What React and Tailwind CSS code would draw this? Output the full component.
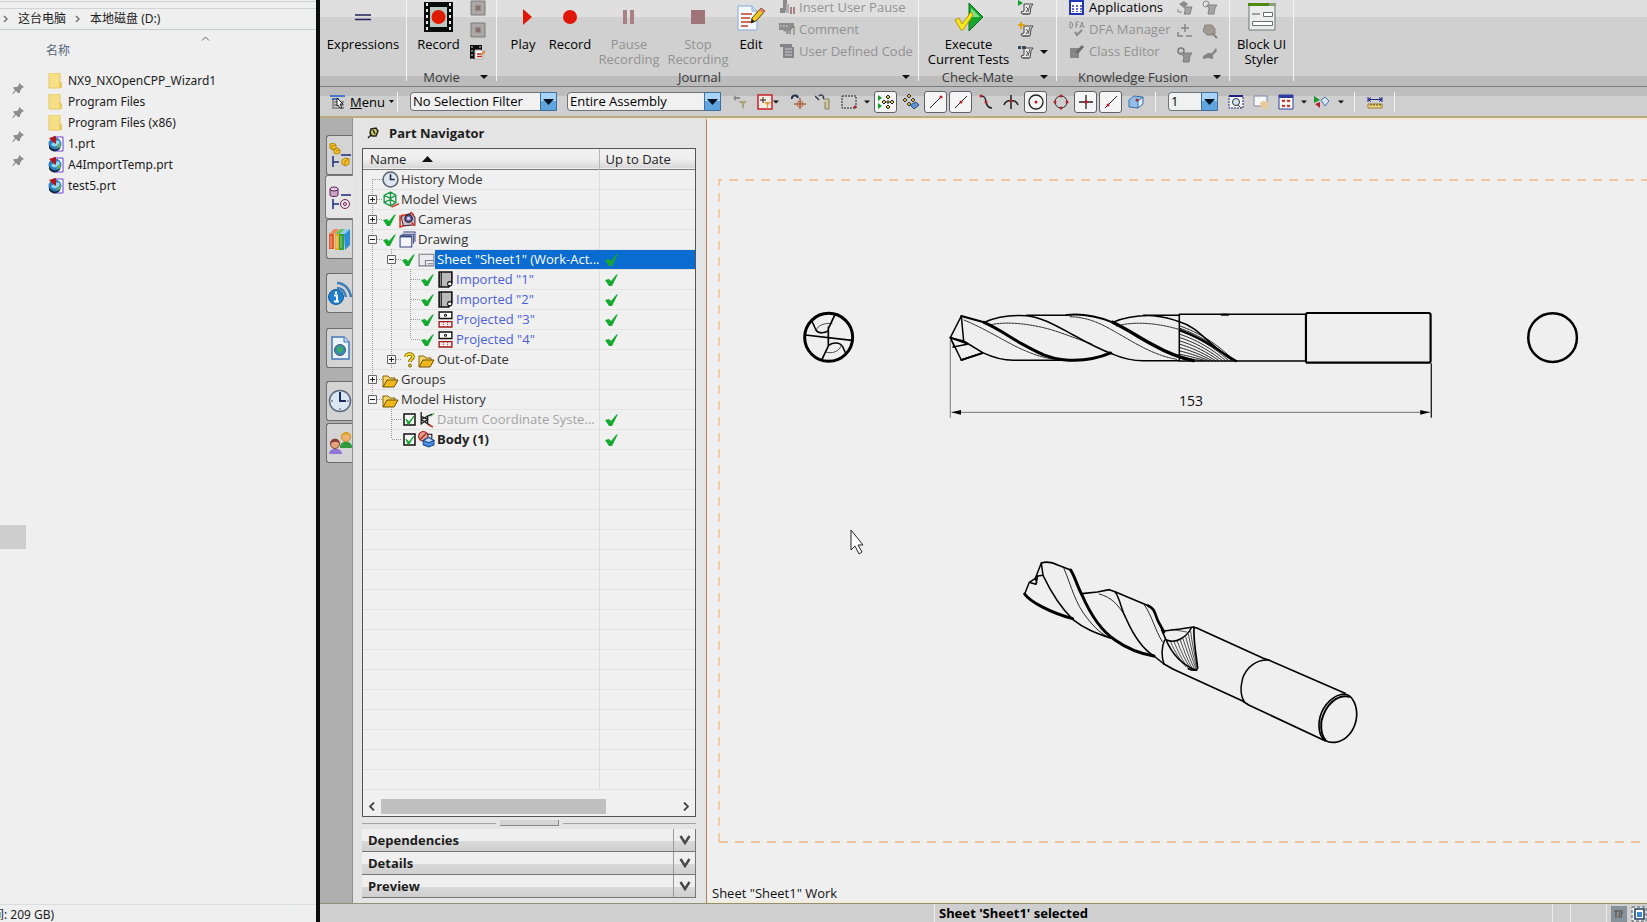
import React from 'react';

const Svg = ({ s = 16, box = 16, className = '', children }) => (
    <svg width={s} height={s} viewBox={`0 0 ${box} ${box}`} fill="none" className={`shrink-0 ${className}`} aria-hidden="true">
        {children}
    </svg>
);

const Down = ({ className = '' }) => (
    <svg width="8" height="4" viewBox="0 0 8 4" className={`shrink-0 ${className}`} aria-hidden="true">
        <path d="M0 0H8L4 4Z" fill="#111" />
    </svg>
);

/* ---------- file explorer ---------- */

const FolderIcon = () => (
    <Svg>
        <path d="M1 0H12V15H1Z" fill="#f6df86" stroke="#e3c766" />
        <path d="M12 8L14 10V15H11Z" fill="#e8c95c" />
    </Svg>
);

const PrtIcon = () => (
    <Svg>
        <path d="M5 1H15V15H5" fill="#fff" stroke="#6a3fd0" />
        <circle cx="7" cy="8" r="6.5" fill="#2b7fc4" />
        <path d="M1 9C3 14 9 15 13 11C10 17 3 16 1 12Z" fill="#123" />
        <path d="M3 8C5 12 10 11 12 6L10 4Z" fill="#8fd8f0" />
        <path d="M8 12L13 6L12 11Z" fill="#7cb342" />
        <path d="M1 2L8 0L8 8L5 6Z" fill="#b4161c" />
    </Svg>
);

const Pin = () => (
    <Svg s={12} box={12}>
        <path d="M7 0L12 4L10 5L8 8L8 10L6 10L4 8L1 11L0 11L3 7L1 5L2 4L5 4L7 2Z" fill="#8d8d8d" />
    </Svg>
);

const files = [
    { name: 'NX9_NXOpenCPP_Wizard1', icon: FolderIcon },
    { name: 'Program Files', icon: FolderIcon },
    { name: 'Program Files (x86)', icon: FolderIcon },
    { name: '1.prt', icon: PrtIcon },
    { name: 'A4ImportTemp.prt', icon: PrtIcon },
    { name: 'test5.prt', icon: PrtIcon },
];

const Chevron = () => (
    <Svg s={8} box={8}>
        <path d="M2 1L5 4L2 7" stroke="#777" strokeWidth="1.5" />
    </Svg>
);

const Explorer = () => (
    <aside className="w-[316px] shrink-0 flex flex-col bg-[#efefef] text-[12px] leading-4 text-[#1c1c1c] font-['Noto_Sans','Noto_Sans_CJK_SC',sans-serif] overflow-hidden">
        <div className="h-2 border-y border-[#cfd3d3] mt-px shrink-0" />
        <nav className="h-[21px] shrink-0 flex items-center pl-[2px] border-b border-[#c6cccc]">
            <Chevron />
            <a href="#pc" className="ml-2">这台电脑</a>
            <span className="mx-2"><Chevron /></span>
            <a href="#d">本地磁盘 (D:)</a>
        </nav>
        <div className="flex flex-1 min-h-0">
            <div className="w-[46px] shrink-0 pt-[53px] flex flex-col">
                <div className="flex flex-col gap-3 pl-3">
                    <Pin /><Pin /><Pin /><Pin />
                </div>
                <div className="mt-[358px] w-[26px] h-6 bg-[#cecece]" />
            </div>
            <div className="flex-1">
                <div className="flex justify-center h-[13px] items-center pr-[15px] pt-1">
                    <svg width="9" height="5" viewBox="0 0 9 5" fill="none" className="ml-16"><path d="M1 4.500L4.500 1L8 4.500" stroke="#666" /></svg>
                </div>
                <button className="text-[#56677c] block">名称</button>
                <ul className="mt-[11px]">
                    {files.map((f) => (
                        <li key={f.name} className="h-[21px] flex items-center gap-1 pl-[2px]">
                            <f.icon />
                            <a href="#file">{f.name}</a>
                        </li>
                    ))}
                </ul>
            </div>
        </div>
        <footer className="h-[18px] shrink-0 border-t border-[#d9dede] -ml-2 leading-[20px] whitespace-nowrap">间: 209 GB)</footer>
    </aside>
);

/* ---------- ribbon ---------- */

const FilmIcon = () => (
    <Svg s={30} box={30}>
        <path d="M0 0H29V30H0Z" fill="#0a0c0c" />
        <path d="M3 1V30M26 1V30" stroke="#e8e8e8" strokeWidth="2" strokeDasharray="3 3" />
        <path d="M6 5H23V25H6Z" fill="#b9c9c4" />
        <circle cx="14.500" cy="15" r="7" fill="#e01b00" />
    </Svg>
);

const EditIcon = () => (
    <Svg s={28} box={28}>
        <path d="M1 3H15L20 8V27H1Z" fill="#f4f8ff" stroke="#8aa7e0" />
        <path d="M15 3V8H20" fill="#cfdcf7" stroke="#8aa7e0" />
        <path d="M4 11H15M4 15H13M4 19H15M4 23H11" stroke="#c2401f" strokeWidth="1.300" />
        <path d="M14 20L15 15L24 5L28 8L19 18Z" fill="#f2c522" stroke="#5b4406" />
        <path d="M24 5L28 8L26 10L22 7Z" fill="#d97a6a" />
        <path d="M14 20L15 16L18 18.500Z" fill="#222" />
    </Svg>
);

const ExecuteIcon = () => (
    <Svg s={30} box={30}>
        <path d="M15 1L29 15L15 29Z" fill="#16a62c" stroke="#0a6d18" />
        <path d="M17 6L26 15L17 15Z" fill="#7fe08a" />
        <path d="M1 18L5 16L8 22L17 10L19 13L9 28H7Z" fill="#f7e522" stroke="#b79b00" />
    </Svg>
);

const StylerIcon = () => (
    <Svg s={28} box={28}>
        <path d="M1 1H27V27H1Z" fill="#ececec" stroke="#6b7a74" />
        <path d="M0 0H28V3H0Z" fill="#4e8a12" />
        <path d="M21 0H28V3H21Z" fill="#8ba07a" />
        <path d="M4 11H12" stroke="#555" />
        <path d="M15.500 9.500H24.500V13.500H15.500ZM4.500 18.500H24.500V22.500H4.500Z" fill="#fff" stroke="#66706c" />
    </Svg>
);

const GreyStop = () => (
    <Svg><path d="M1 1H15V15H1Z" fill="#a9a5a5" stroke="#7f7c7c" /><path d="M4 4H12V12H4Z" fill="#979090" stroke="#b9b4b4" /><path d="M6 6H10V10H6Z" fill="#8b6e70" /></Svg>
);
const FilmEdit = () => (
    <Svg><path d="M0 1H12V15H0Z" fill="#111" /><path d="M2 2V15M10 2V5" stroke="#ddd" strokeDasharray="2 2" /><path d="M5 6H11L13 8V15H5Z" fill="#fff" stroke="#aaa" /><path d="M7 10H11M7 12.500H12" stroke="#b22" strokeWidth="1.500" /><path d="M11 11L15 7" stroke="#d88a3a" strokeWidth="2" /></Svg>
);
const InsertPause = () => (
    <Svg><path d="M4 1H8V8L6 14H1V9H4Z" fill="#8b8b8b" /><path d="M7 5H10V14H7Z" fill="#b0b0b0" /><path d="M12 8V15M15 8V15" stroke="#a58084" strokeWidth="2" /></Svg>
);
const CommentIcon = () => (
    <Svg><path d="M0 2H15V7H12V13H8L4 9H0Z" fill="#8d8d8d" /><path d="M1 5H9M3 11H12" stroke="#c9c9c9" strokeDasharray="2 1" /><path d="M11 9L15 5V14" stroke="#777" /></Svg>
);
const CodeIcon = () => (
    <Svg><path d="M1 1H13V4H15V15H4V4H1Z" fill="#858589" /><path d="M6 6H13M6 9H13M6 12H13" stroke="#cfcfcf" /></Svg>
);
const TestIcon = ({ badge }) => (
    <Svg>
        <path d="M6 4H15L13 7L12 14H4L3 12L6 11Z" fill="#e7e7e7" stroke="#444" />
        <path d="M8 7L10 9L8 12M12 5L10 12M5 14H11" stroke="#555" />
        {badge === 'run' && <path d="M0 0L5 3L0 6Z" fill="#12a02b" />}
        {badge === 'new' && <path d="M3 0V7M0 3H7" stroke="#e0a21b" strokeWidth="2" />}
        {badge === 'find' && <path d="M0 2H3V5H0ZM4 2H8V5H4Z" fill="#3b4653" />}
    </Svg>
);
const AppIcon = () => (
    <Svg><path d="M1 2H14V15H1Z" fill="#fff" stroke="#2236b8" strokeWidth="2" /><path d="M4 6V13M8 6V13M12 6V13" stroke="#2236b8" strokeWidth="1.500" strokeDasharray="2 1" /></Svg>
);
const DfaIcon = () => (
    <Svg><path d="M1 1V7H2C4 7 4 1 2 1ZM7 7V1H10M7 4H9M11 7L13 1L15 7M12 5H14" stroke="#8a8a8a" /><path d="M6 11L8 14L13 9" stroke="#888" strokeWidth="2" /></Svg>
);
const ClassIcon = () => (
    <Svg><path d="M1 5H10V15H1Z" fill="#878787" /><path d="M6 9L13 2L15 4L9 11Z" fill="#6d6d6d" /></Svg>
);
const GreyBlob = ({ v }) => (
    <Svg>
        {v === 0 && <><path d="M2 4L7 1L11 4L7 8Z" fill="#8b8b8b" /><path d="M8 7H15L14 10L13 14H7L8 11Z" fill="#a5a5a5" stroke="#808080" /><path d="M1 9V12H5" stroke="#808080" /></>}
        {v === 1 && <><circle cx="4" cy="4" r="3" stroke="#8a8a8a" /><path d="M5 5H15L13 8L12 14H6L7 8Z" fill="#a5a5a5" stroke="#858585" /></>}
        {v === 2 && <path d="M8 0V8M4 4H12M1 8V12H6M9 12H15" stroke="#858585" strokeWidth="1.500" />}
        {v === 3 && <><path d="M3 1H10L13 5V10L10 11H5L1 7Z" fill="#a09a92" stroke="#8a857f" /><path d="M10 9L15 14" stroke="#8a857f" strokeWidth="2" /></>}
        {v === 4 && <><circle cx="4" cy="4" r="3" stroke="#777" strokeWidth="1.500" /><path d="M3 6H15L13 9L12 15H6L7 10Z" fill="#929292" stroke="#7e7e7e" /></>}
        {v === 5 && <path d="M1 9L6 6H10L14 1L15 4L11 8V12L6 11L1 12Z" fill="#858585" />}
    </Svg>
);

const Group = ({ label, more, className = '', children }) => (
    <section className={`shrink-0 h-[81px] border-r border-[#f4f4f4] flex flex-col ${className}`}>
        <div className="flex h-[68px] overflow-hidden">{children}</div>
        <div className="flex h-[17px] -mb-1 text-[#3a3a3a]">
            <span className="flex-1 text-center leading-[18px]">{label}</span>
            {more && <button aria-label={`${label} options`} className="w-5 pl-1"><Down /></button>}
        </div>
    </section>
);

const Big = ({ label, off, className = '', children }) => (
    <button disabled={off} className={`flex flex-col items-center shrink-0 whitespace-pre leading-[15px] ${off ? 'text-[#929292]' : 'text-black'} ${className}`}>
        <span className="h-[37px] flex items-center justify-center pb-1">{children}</span>
        {label}
    </button>
);

const Small = ({ icon, label, off }) => (
    <button disabled={off} aria-label={label ? undefined : 'Tool'} className={`flex items-center gap-1 h-[22px] whitespace-nowrap ${off ? 'text-[#929292]' : 'text-black'}`}>
        {icon}
        {label}
    </button>
);

const Ribbon = () => (
    <div className="h-[87px] shrink-0 flex overflow-hidden border-b border-[#7c7c7c] bg-[linear-gradient(#dfdfdf_0_17px,#d0d0d0_17px_76px,#bcbcbc_76px)]">
        <Group className="w-[87px]">
            <Big label="Expressions" className="w-full">
                <svg width="18" height="8" viewBox="0 0 18 8"><path d="M1 2H17M1 6.500H17" stroke="#22225e" strokeWidth="1.500" /></svg>
            </Big>
        </Group>
        <Group label="Movie" more className="w-[90px]">
            <Big label="Record" className="w-[63px]"><FilmIcon /></Big>
            <div className="-mt-[3px]">
                <Small icon={<GreyStop />} off />
                <Small icon={<GreyStop />} off />
                <Small icon={<FilmEdit />} />
            </div>
        </Group>
        <Group label="Journal" more className="w-[422px] pl-1">
            <Big label="Play" className="w-11"><svg width="9" height="16" viewBox="0 0 9 16" className="ml-2"><path d="M0 0L9 8L0 16Z" fill="#e01608" /></svg></Big>
            <Big label="Record" className="w-[50px]"><svg width="14" height="14" viewBox="0 0 14 14"><circle cx="7" cy="7" r="7" fill="#e01608" /></svg></Big>
            <Big label={'Pause\nRecording'} off className="w-[68px]"><svg width="12" height="14" viewBox="0 0 12 14"><path d="M0 0H4V14H0ZM7 0H11V14H7Z" fill="#a88084" /></svg></Big>
            <Big label={'Stop\nRecording'} off className="w-[70px]"><svg width="14" height="14" viewBox="0 0 14 14"><path d="M0 0H14V14H0Z" fill="#a0757a" /></svg></Big>
            <Big label="Edit" className="w-9"><EditIcon /></Big>
            <div className="-mt-1 ml-[10px]">
                <Small icon={<InsertPause />} label="Insert User Pause" off />
                <Small icon={<CommentIcon />} label="Comment" off />
                <Small icon={<CodeIcon />} label="User Defined Code" off />
            </div>
        </Group>
        <Group label="Check-Mate" more className="w-[138px]">
            <Big label={'Execute\nCurrent Tests'} className="w-[99px]"><ExecuteIcon /></Big>
            <div className="-mt-[3px]">
                <Small icon={<TestIcon badge="run" />} />
                <Small icon={<TestIcon badge="new" />} />
                <Small icon={<TestIcon badge="find" />} />
            </div>
            <Down className="mt-[50px] ml-[6px]" />
        </Group>
        <Group label="Knowledge Fusion" more className="w-[173px]">
            <div className="-mt-1 ml-3 w-[108px]">
                <Small icon={<AppIcon />} label="Applications" />
                <Small icon={<DfaIcon />} label="DFA Manager" off />
                <Small icon={<ClassIcon />} label="Class Editor" off />
            </div>
            <div className="-mt-[3px] grid grid-cols-2 gap-x-[9px]">
                {[0, 1, 2, 3, 4, 5].map((v) => <Small key={v} icon={<GreyBlob v={v} />} off />)}
            </div>
        </Group>
        <Group className="w-16">
            <Big label={'Block UI\nStyler'} className="w-full"><StylerIcon /></Big>
        </Group>
    </div>
);

/* ---------- selection bar ---------- */

const Combo = ({ label, value, className }) => (
    <label className={`relative h-[19px] shrink-0 block ${className}`}>
        <span className="sr-only">{label}</span>
        <select className="appearance-none block w-full h-full bg-[#f1f1f1] ring-1 ring-inset ring-[#6f7479] pl-[3px] leading-[19px] text-black rounded-sm">
            <option>{value}</option>
        </select>
        <svg width="17" height="19" viewBox="0 0 17 19" className="absolute right-0 top-0 pointer-events-none">
            <path d="M.5 .5H16.500V18.500H.5Z" fill="#a9d4f5" stroke="#3f6f9d" />
            <path d="M1 9H16V18H1Z" fill="#5fa5dd" />
            <path d="M3 7H14L8.500 13Z" fill="#071527" />
        </svg>
    </label>
);

const Tool = ({ on, name, className = 'w-[25px]', children }) => (
    <button aria-label={name} aria-pressed={!!on} className={`h-[22px] shrink-0 flex items-center justify-center ${className}`}>
        {on ? <span className="w-[23px] h-[22px] flex items-center justify-center bg-[#f5f5f5] border border-[#5d6167] rounded-[3px]">{children}</span> : children}
    </button>
);

const Sep = ({ className = '' }) => <span className={`w-px h-5 bg-[#f2f2f2] shrink-0 ${className}`} />;

const Dot = ({ x, y }) => <circle cx={x} cy={y} r="1.500" fill="#b3202c" />;

const snaps = [
    { name: 'Enable Snap Point', on: true, art: <><path d="M0 1L4 4L0 7ZM0 9L4 12L0 15Z" fill="#12a02b" /><path d="M10 1L12 3L10 5L8 3ZM10 11L12 13L10 15L8 13ZM6 6L8 8L6 10L4 8ZM14 6L16 8L14 10L12 8Z" fill="#e8c832" stroke="#222" /><path d="M8 8H12M10 6V10" stroke="#222" /></> },
    { name: 'Clear Snap Point', art: <><path d="M6 0L8 2L6 4L4 2ZM2 4L4 6L2 8L0 6ZM10 4L12 6L10 8L8 6ZM6 8L8 10L6 12L4 10Z" fill="#d9b93c" stroke="#333" /><path d="M7 11L13 8L16 11L11 15Z" fill="#5d93d0" stroke="#2b4d7d" /></> },
    { name: 'End Point', on: true, art: <><path d="M2 14L12 4" stroke="#222" /><Dot x={13} y={3} /></> },
    { name: 'Mid Point', on: true, art: <><path d="M2 14L14 2" stroke="#222" /><Dot x={8} y={8} /></> },
    { name: 'Control Point', art: <><path d="M2 2C9 2 7 6 8 8C9 13 11 14 14 14" stroke="#222" strokeWidth="1.500" /><Dot x={3} y={2} /><Dot x={8} y={8} /></> },
    { name: 'Intersection Point', art: <><path d="M8 1V15M1 11C3 5 13 5 15 11" stroke="#222" strokeWidth="1.500" /><Dot x={8} y={7} /></> },
    { name: 'Arc Center', on: true, art: <><circle cx="8" cy="8" r="7" stroke="#222" strokeWidth="1.300" /><Dot x={8} y={8} /></> },
    { name: 'Quadrant Point', art: <><circle cx="8" cy="8" r="6" stroke="#222" /><Dot x={8} y={2} /><Dot x={8} y={14} /><Dot x={2} y={8} /><Dot x={14} y={8} /></> },
    { name: 'Existing Point', on: true, art: <><path d="M8 1V15M1 8H15" stroke="#222" strokeWidth="1.300" /><path d="M8 6V10M6 8H10" stroke="#b3202c" strokeWidth="1.500" /></> },
    { name: 'Point on Curve', on: true, art: <><path d="M2 14L14 2" stroke="#222" /><Dot x={5} y={11} /></> },
    { name: 'Point on Face', art: <><path d="M1 6L6 2L15 3L12 10L10 14L1 13Z" fill="#8fbfe9" stroke="#3b6ea8" /><path d="M10 14L10 7L15 3V10Z" fill="#dcecf9" stroke="#3b6ea8" /><Dot x={9} y={6} /></> },
];

const SelectionBar = () => (
    <div className="h-[31px] shrink-0 flex items-center overflow-hidden border-b-2 border-[#b9ad7c] bg-[linear-gradient(#bdbdbd_0_9px,#cfcfcf_9px)]">
        <button className="flex items-center w-[77px] pl-[10px] shrink-0">
            <Svg><path d="M0 2H15M2 5H9" stroke="#4b78c8" strokeWidth="2" /><path d="M4 8H14M4 11H14M4 14H14M3 4V15" stroke="#555" /><path d="M7 4L13 10H10L12 14L10 14L8 11L7 12Z" fill="#fff" stroke="#222" /></Svg>
            <span className="ml-1"><u>M</u>enu</span>
            <svg width="5" height="3" viewBox="0 0 5 3" className="ml-1"><path d="M0 0H5L2.500 3Z" fill="#111" /></svg>
        </button>
        <Sep />
        <Combo label="Type filter" value="No Selection Filter" className="w-[147px] ml-3" />
        <Combo label="Selection scope" value="Entire Assembly" className="w-[154px] ml-[10px]" />
        <Tool name="Reset Filters" className="w-[25px] ml-[6px]">
            <Svg><path d="M1 4L4 1V3H8V5H4V7Z" fill="#8a8a8a" /><path d="M6 7H15L12 10V15L10 13V10Z" fill="#aaa27c" /></Svg>
        </Tool>
        <Tool name="General Filter">
            <Svg><path d="M1 1H15V15H1Z" fill="#f3ece4" stroke="#c8202b" strokeWidth="1.500" /><path d="M6 3V9M3 6H9" stroke="#222" /><path d="M7 8H14L11 11V15L10 14V11Z" fill="#d8a43a" /></Svg>
        </Tool>
        <svg width="6" height="4" viewBox="0 0 8 4" className="shrink-0 -ml-1"><path d="M0 0H8L4 4Z" fill="#111" /></svg>
        <Tool name="Snap Origin" className="w-[25px] ml-[6px]">
            <Svg><path d="M2 5A3 3 0 0 1 8 4" stroke="#22324d" strokeWidth="2" /><path d="M10 4V15M4 10H16" stroke="#8a2b1f" /><circle cx="10" cy="10" r="3" stroke="#c86a25" /></Svg>
        </Tool>
        <Tool name="Find">
            <Svg><path d="M0 2L4 6M4 2A2 2 0 1 1 8 5" stroke="#333d49" strokeWidth="1.500" /><path d="M9 5H14V15H10V8" fill="#cdc79e" stroke="#87805a" /></Svg>
        </Tool>
        <Tool name="Rectangle Select" className="w-[27px]">
            <Svg><path d="M1 2H15V14H1Z" stroke="#222" strokeDasharray="2 1" /><Dot x={14} y={13} /></Svg>
        </Tool>
        <svg width="6" height="4" viewBox="0 0 8 4" className="shrink-0 ml-[2px]"><path d="M0 0H8L4 4Z" fill="#111" /></svg>
        <div className="flex ml-[3px]">
            {snaps.map((t) => <Tool key={t.name} name={t.name} on={t.on}><Svg>{t.art}</Svg></Tool>)}
        </div>
        <Sep className="ml-[7px]" />
        <Combo label="Layer" value="1" className="w-[50px] ml-3" />
        <Tool name="Fit" className="w-[25px] ml-[5px]">
            <Svg><path d="M1 2H15V14H1Z" fill="#f4f4f4" stroke="#23237d" strokeDasharray="2 1" /><path d="M1 2H15" stroke="#23237d" strokeWidth="2" /><circle cx="8" cy="8" r="3.500" stroke="#333" fill="#cfe6ee" /><path d="M10 11L13 14" stroke="#333" /></Svg>
        </Tool>
        <Tool name="Pan">
            <Svg><path d="M1 2H14V12H1Z" fill="#f7f7f7" stroke="#7d8ba8" /><path d="M7 9L10 7L15 8V14L9 15Z" fill="#ecc998" /></Svg>
        </Tool>
        <Tool name="Layout">
            <Svg><path d="M1 1H15V15H1Z" fill="#fff" stroke="#2d3d9f" /><path d="M1 2.500H15" stroke="#2d3d9f" strokeWidth="3" /><path d="M4 6L7 8M7 6L4 8M9 6L12 8M12 6L9 8M4 11L7 13M7 11L4 13M9 11L12 13M12 11L9 13" stroke="#c2261b" strokeWidth="1.500" /></Svg>
        </Tool>
        <svg width="6" height="4" viewBox="0 0 8 4" className="shrink-0 ml-[3px]"><path d="M0 0H8L4 4Z" fill="#111" /></svg>
        <Tool name="Render Style" className="w-[29px]">
            <Svg><path d="M0 2L6 6L0 9Z" fill="#18972a" /><path d="M1 10L6 8V14Z" fill="#b3202c" /><path d="M7 6L11 3L15 7L11 12Z" fill="#d5e6f5" stroke="#4b6fae" /></Svg>
        </Tool>
        <svg width="6" height="4" viewBox="0 0 8 4" className="shrink-0 ml-[2px]"><path d="M0 0H8L4 4Z" fill="#111" /></svg>
        <Sep className="ml-[10px]" />
        <Tool name="Measure" className="w-[39px]">
            <Svg><path d="M1 3V8M15 3V8M1 5.500H15M4 3.500L1 5.500L4 7.500M12 3.500L15 5.500L12 7.500" stroke="#222c80" /><path d="M1 10H15V14H1Z" fill="#efd98a" stroke="#9a7a2c" /><path d="M4 10V12M7 10V12M10 10V12M13 10V12" stroke="#5b4612" /></Svg>
        </Tool>
        <Sep />
    </div>
);

/* ---------- resource bar ---------- */

const tabs = [
    { name: 'Assembly Navigator', cls: '', art: <><path d="M2 1L6 0L8 2V6L4 7L2 5ZM6 6L10 5L12 7V10L8 11L6 10ZM14 17L17 15L21 16V21L17 23L14 21Z" fill="#f2c32a" stroke="#b88708" /><path d="M4 3L8 2M4 3V7M8 8L12 7M17 18L21 16M17 18V23" stroke="#b88708" /><path d="M5 13V24M5 19H11M13 12H23" stroke="#1c2b7a" strokeWidth="1.500" /></> },
    { name: 'Part Navigator', cls: 'active', art: <><path d="M2 4V10C2 12 10 12 10 10V4" fill="#caa5c4" stroke="#5b1e56" /><ellipse cx="6" cy="4" rx="4" ry="2" fill="#e5cce2" stroke="#5b1e56" /><path d="M13 10H23M5 14V24M5 19H11" stroke="#1c2b7a" strokeWidth="1.500" /><circle cx="17" cy="19" r="4.500" stroke="#7a2356" /><circle cx="17" cy="19" r="1.500" stroke="#7a2356" /></> },
    { name: 'Reuse Library', cls: '', art: <><path d="M1 7L6 7V22H1Z" fill="#e3592e" /><path d="M7 7H11V23H7Z" fill="#f0a81f" /><path d="M11 7H16V23H11Z" fill="#2fa339" /><path d="M16 7L22 2V18L17 23Z" fill="#2a8fd6" /><path d="M1 7L6 2H11L7 7Z" fill="#f08a5a" /><path d="M7 7L12 2H17L12 7Z" fill="#6cc25c" /><path d="M12 7L17 2H22L17 7Z" fill="#8fc9ef" /><path d="M3 9V21M9 9V21M13 9V21" stroke="#fff" strokeOpacity=".5" /></> },
    { name: 'HD3D Tools', cls: 'mt-[14px]', art: <><path d="M9 2C16 2 22 8 23 16M9 7C14 7 17 11 18 16" stroke="#3f7fb8" strokeWidth="2.500" /><circle cx="8" cy="16" r="7.500" fill="#1f7fcf" stroke="#165a9a" /><path d="M8 10.500V13M6 14.500H9V20M6 20.500H11" stroke="#fff" strokeWidth="2" /></> },
    { name: 'Web Browser', cls: 'mt-[15px]', art: <><path d="M4 1H16L21 6V23H4Z" fill="#eaf3fc" stroke="#4378b8" strokeWidth="1.500" /><path d="M16 1V6H21" fill="#c3dbf2" stroke="#4378b8" /><circle cx="12" cy="14" r="5.500" fill="#2f8fc0" stroke="#555" /><path d="M9 12L13 10L15 14L11 18Z" fill="#3fae4c" /></> },
    { name: 'History', cls: 'mt-[13px]', art: <><circle cx="12" cy="12" r="10.500" fill="#dbe6f2" stroke="#5c6a7c" strokeWidth="1.500" /><path d="M12 3V12H18" stroke="#1b2c55" strokeWidth="2" /><path d="M12 19V21M3 12H5M19 12H21" stroke="#555" /></> },
    { name: 'Roles', cls: 'mt-[2px]', art: <><path d="M12 16C12 9 24 9 24 16V17H12Z" fill="#2f9b3a" /><circle cx="18" cy="6" r="4.500" fill="#eeb170" stroke="#c98a1d" /><path d="M13 5C14 0 22 0 23 5C20 3 16 3 13 5Z" fill="#d9a520" /><path d="M1 23C1 16 14 16 14 23Z" fill="#8f76d6" /><circle cx="7" cy="13" r="4.500" fill="#e2a27e" stroke="#8b3d31" /><path d="M2 13C2 6 12 6 12 13C10 10 5 10 2 13Z" fill="#8b3d31" /></> },
];

const ResourceBar = () => (
    <div className="w-[33px] shrink-0 pt-[17px] flex flex-col items-end bg-[#afafaf] border-r border-[#8e8e8e]">
        {tabs.map((t) => (
            <button
                key={t.name}
                aria-label={t.name}
                className={t.cls === 'active'
                    ? 'w-7 h-11 -mr-px bg-[#e6e6e6] border border-r-0 border-[#777] rounded-l-[3px] flex items-center justify-center'
                    : `w-[26px] h-10 bg-[#d4d4d4] border border-r-0 border-[#6c6c6c] rounded-l-[3px] flex items-center justify-center ${t.cls}`}
            >
                <Svg s={24} box={24}>{t.art}</Svg>
            </button>
        ))}
    </div>
);

/* ---------- part navigator ---------- */

const Check = () => (
    <Svg s={17} box={17}><path d="M1 9L5 8L7 10L12 4L14 3L8 15H5Z" fill="#16a92f" /></Svg>
);
const Boxed = () => (
    <Svg s={17} box={17}><path d="M3 3H14V14H3Z" fill="#f6f6f6" stroke="#111" strokeWidth="1.500" /><path d="M5 8L8 11L13 5L8 13H7Z" fill="#16a92f" stroke="#16a92f" /></Svg>
);
const Question = () => (
    <Svg s={17} box={17}><path d="M5 6C5 2 12 2 12 6C12 8 9 8 9 11" stroke="#6d5b00" strokeWidth="3.500" /><path d="M5 6C5 2 12 2 12 6C12 8 9 8 9 11" stroke="#f0d520" strokeWidth="2" /><circle cx="9" cy="14.500" r="1.500" fill="#f0d520" stroke="#6d5b00" /></Svg>
);
const OpenFolder = () => (
    <Svg s={17} box={17}><path d="M1 16V5H6L8 7H13V9" fill="#f3d66a" stroke="#8a6508" /><path d="M1 16L5 9H16L12 16Z" fill="#efb81c" stroke="#6f5007" /></Svg>
);
const nodeArt = {
    clock: <><circle cx="8" cy="8" r="7" fill="#dfe5ee" stroke="#5a6472" strokeWidth="1.500" /><path d="M8 3V8H12" stroke="#1c2c55" strokeWidth="1.500" /></>,
    views: <><path d="M2 4L8 1L13 4V11L8 14L2 11ZM2 4L8 7L13 4M8 1V14M2 11L8 8L13 11" stroke="#1e9a48" strokeWidth="1.300" /><path d="M9 15L16 12" stroke="#d23a22" strokeWidth="1.500" /></>,
    camera: <><path d="M2 5L12 2L15 6V13L4 14Z" fill="#c9bfcf" stroke="#5b2330" /><circle cx="9" cy="7" r="3.500" fill="#6a5fb0" stroke="#111" /><path d="M1 4L1 15L4 14M2 4L6 4M12 2L11 1L14 4M12 11L15 14" stroke="#e2331f" strokeWidth="1.500" /><circle cx="9" cy="7" r="1.500" fill="#d8d8f0" /></>,
    drawing: <><path d="M4 1H15V10M2.500 3H13.500V12" stroke="#3a4584" /><path d="M1 5H12V15H1Z" fill="#f5f5fa" stroke="#3a4584" /><path d="M1 5H12" stroke="#3a4584" strokeWidth="2" /></>,
    sheet: <><path d="M1 3H15V14H1Z" fill="#ececf0" stroke="#7a7a84" /><path d="M7 14V9H15M9 12H14" stroke="#7a7a84" /></>,
    imported: <><path d="M2 1H14V11L11 15H2Z" fill="#bababa" stroke="#111" strokeWidth="1.500" /><path d="M4 1V15" stroke="#111" /><circle cx="12" cy="12" r="2" fill="#fff" stroke="#111" /></>,
    projected: <><path d="M2 1H14V7H2Z" fill="#fff" stroke="#111" strokeWidth="1.300" /><circle cx="8" cy="4" r="1" stroke="#111" /><path d="M2 10H14V15H2Z" stroke="#a01b1b" strokeWidth="1.300" /><path d="M6 10V15M10 10V15" stroke="#c01b1b" strokeDasharray="1 1" /></>,
    datum: <><path d="M3 1V13M3 8L13 3M3 8L12 14M3 5L9 8L3 12M9 4V12" stroke="#222" strokeWidth="1.300" /><path d="M12 5L15 2" stroke="#27a243" /><path d="M10 13L14 15" stroke="#c9362a" strokeWidth="1.500" /></>,
    body: <><circle cx="5" cy="5" r="4.500" fill="#e39a8d" stroke="#9b2116" /><path d="M2 8L8 2" stroke="#9b2116" /><path d="M5 9L10 6L15 9V13L10 15L5 13Z" fill="#4a8fdf" stroke="#1b4a98" /><path d="M5 9L10 11L15 9L10 6Z" fill="#bcd9f7" stroke="#1b4a98" /><path d="M9 3H13V7" stroke="#111" /></>,
};

// one 19px column of the tree: v = line, t = branch, l = last branch, f = first, e = last expander
const Guide = ({ kind }) => (
    <svg width="19" height="20" viewBox="0 0 19 20" fill="none" className="shrink-0" aria-hidden="true">
        <g stroke="#9a9a9a" strokeDasharray="1 1">
            {'vt+-'.includes(kind) && <path d="M9.500 0V20" />}
            {'le'.includes(kind) && <path d="M9.500 0V10" />}
            {kind === 'f' && <path d="M9.500 10V20" />}
            {'tl+-ef'.includes(kind) && <path d="M10 10.500H19" />}
        </g>
        {'+-e'.includes(kind) && <path d="M5.500 6.500H13.500V14.500H5.500Z" fill="#f6f6f6" stroke="#666" />}
        {'+-e'.includes(kind) && <path d={kind === '+' ? 'M7 10.500H12M9.500 8V13' : 'M7 10.500H12'} stroke="#222" />}
    </svg>
);

const nodes = [
    { g: 'f', art: 'clock', text: 'History Mode' },
    { g: '+', art: 'views', text: 'Model Views' },
    { g: '+', mark: Check, art: 'camera', text: 'Cameras' },
    { g: '-', mark: Check, art: 'drawing', text: 'Drawing' },
    { g: 'v-', mark: Check, art: 'sheet', text: 'Sheet "Sheet1" (Work-Act...', ok: true, sel: true },
    { g: 'vvt', mark: Check, art: 'imported', text: 'Imported "1"', ok: true, color: 'text-[#4a5fd6]' },
    { g: 'vvt', mark: Check, art: 'imported', text: 'Imported "2"', ok: true, color: 'text-[#4a5fd6]' },
    { g: 'vvt', mark: Check, art: 'projected', text: 'Projected "3"', ok: true, color: 'text-[#4a5fd6]' },
    { g: 'vvl', mark: Check, art: 'projected', text: 'Projected "4"', ok: true, color: 'text-[#4a5fd6]' },
    { g: 'v+', mark: Question, art: 'folder', text: 'Out-of-Date' },
    { g: '+', art: 'folder', text: 'Groups' },
    { g: 'e', art: 'folder', text: 'Model History' },
    { g: ' t', mark: Boxed, art: 'datum', text: 'Datum Coordinate Syste...', ok: true, color: 'text-[#a3a3a3]' },
    { g: ' l', mark: Boxed, art: 'body', text: 'Body (1)', ok: true, color: 'text-[#222] font-bold' },
];

const Row = ({ n }) => (
    <tr className="h-5 border-b border-[#e2e2e2]">
        <td className="p-0 border-r border-[#dcdcdc]">
            <div className="flex items-center h-[19px]">
                {n.g.split('').map((k, i) => <Guide key={i} kind={k} />)}
                {n.mark && <n.mark />}
                {n.art === 'folder' ? <OpenFolder /> : <Svg s={17}>{nodeArt[n.art]}</Svg>}
                <span className={`flex-1 h-full leading-[19px] pl-[2px] whitespace-nowrap ${n.sel ? 'bg-[#0a6cd0] text-white' : n.color || 'text-[#333]'}`}>{n.text}</span>
            </div>
        </td>
        <td className={`p-0 pl-1 ${n.sel ? 'bg-[#0a6cd0]' : ''}`}>{n.ok && <Check />}</td>
    </tr>
);

const Section = ({ title }) => (
    <button className="h-[23px] shrink-0 w-full flex items-center border-b border-r border-[#777] bg-[linear-gradient(#efefef_0_12px,#d9d9d9_12px,#cfcfcf)]">
        <span className="flex-1 text-left pl-[6px] font-bold text-[#1d1d1d]">{title}</span>
        <span className="w-[22px] h-full border-l border-[#999] flex items-center justify-center">
            <svg width="12" height="10" viewBox="0 0 12 10" fill="none"><path d="M1.500 1L6 8L10.500 1" stroke="#4a4a4a" strokeWidth="2.500" /></svg>
        </span>
    </button>
);

const Navigator = () => (
    <div className="w-[353px] shrink-0 flex flex-col bg-[#e4e4e4] pl-[9px] pr-[10px] pb-[5px] overflow-hidden">
        <h2 className="h-[30px] shrink-0 flex items-center pl-[5px] font-bold text-[#1d1d1d]">
            <Svg s={12} box={12}><path d="M4 2L9 1L11 4L9 9L5 9L3 6Z" fill="#cfcf5a" stroke="#222" strokeWidth="1.500" /><path d="M1 11L4 8M6 3L8 7" stroke="#222" strokeWidth="1.500" /></Svg>
            <span className="ml-[10px]">Part Navigator</span>
        </h2>
        <div className="flex-1 min-h-0 flex flex-col border border-[#555] bg-[#f0f0f0]">
            <div className="flex-1 min-h-0 overflow-hidden">
                <table className="w-full table-fixed border-collapse">
                    <thead>
                        <tr className="h-5 bg-[linear-gradient(#f0f0f0_0_9px,#d8d8d8)] border-b border-[#777] text-left text-[#222]">
                            <th className="w-[236px] p-0 pl-[7px] font-normal border-r border-[#b5b5b5] leading-[18px]">
                                Name
                                <svg width="11" height="6" viewBox="0 0 11 6" className="inline ml-4 mb-[2px]"><path d="M0 6H11L5.500 0Z" fill="#111" /></svg>
                            </th>
                            <th className="p-0 pl-[6px] font-normal leading-[18px]">Up to Date</th>
                        </tr>
                    </thead>
                    <tbody>
                        {nodes.map((n) => <Row key={n.text} n={n} />)}
                        {Array.from({ length: 17 }, (_, i) => (
                            <tr key={i} className="h-5 border-b border-[#e2e2e2]"><td className="border-r border-[#dcdcdc]" /><td /></tr>
                        ))}
                    </tbody>
                </table>
            </div>
            <div className="h-[19px] shrink-0 flex items-center px-[6px] pb-px">
                <svg width="6" height="9" viewBox="0 0 6 9" fill="none"><path d="M5 0.500L1 4.500L5 8.500" stroke="#444" strokeWidth="1.800" /></svg>
                <div className="flex-1 mx-[6px]"><div className="w-[76%] h-[15px] bg-[#c0c0c0]" /></div>
                <svg width="6" height="9" viewBox="0 0 6 9" fill="none"><path d="M1 0.500L5 4.500L1 8.500" stroke="#444" strokeWidth="1.800" /></svg>
            </div>
        </div>
        <div className="h-3 shrink-0 flex items-center gap-1">
            <span className="flex-1 h-px bg-[#a5a5a5]" />
            <span className="w-[59px] h-[6px] bg-[#d4d4d4] border-b border-r border-[#888]" />
            <span className="flex-1 h-px bg-[#a5a5a5]" />
        </div>
        <Section title="Dependencies" />
        <Section title="Details" />
        <Section title="Preview" />
    </div>
);

/* ---------- drawing sheet ---------- */

const hatch = [108, 115, 124, 133, 143, 153, 163, 173, 183, 193, 203];

const SideView = () => (
    <g transform="translate(780 290) scale(.3333)" fill="none" stroke="#000" strokeWidth="4.500" strokeLinecap="round" strokeLinejoin="round">
        {/* end view */}
        <circle cx="146" cy="142" r="72" strokeWidth="9" />
        <path d="M76 135L216 151M165 74L145 116V168L126 208M145 112V165" strokeWidth="5" />
        <path d="M95 92L108 120C116 132 135 130 145 122M198 192L188 170C178 155 158 158 146 166" />
        <path d="M108 122C112 105 135 98 156 101M136 186C155 192 178 186 184 166" strokeWidth="2" />

        {/* point */}
        <path d="M544 78L511 143L544 210L608 188M544 78L551 153M511 143L551 153L608 188M519 171L562 163M511 143L524 172" />
        <path d="M544 210L606 190M511 143L560 160" strokeWidth="6" />

        {/* flutes */}
        <path d="M544 78L612 97" strokeWidth="6" />
        <path d="M612 97C660 118 690 142 730 164C770 185 800 204 850 209C910 215 955 205 992 189" strokeWidth="9" />
        <path d="M612 97C650 80 690 74 740 77C790 83 830 108 880 135C930 163 970 182 1000 193C1035 208 1060 212 1090 212H1198" />
        <path d="M608 188C640 203 665 211 700 211H850M740 76H860" />
        <path d="M860 75C910 70 950 78 998 97" strokeWidth="6" />
        <path d="M998 97C1050 122 1080 145 1120 165C1150 182 1185 200 1240 212" strokeWidth="10" />
        <path d="M998 97C1040 80 1075 75 1120 77C1150 80 1175 86 1200 96M1090 76H1198" />
        <path d="M552 90C620 118 680 158 730 180C770 197 800 206 830 208M625 106C680 92 750 102 810 118C850 130 900 150 935 162M870 80C930 82 970 105 1010 128C1070 162 1120 195 1190 208M1010 108C1060 94 1130 98 1196 118" strokeWidth="2.500" strokeDasharray="6 3" />

        {/* run-out */}
        <path d="M1198 73V213M1198 73H1578M1198 213H1578" />
        <path d="M1200 96C1245 108 1275 148 1320 182C1340 200 1350 208 1370 213" strokeWidth="5" />
        <path d="M1200 120C1250 138 1290 162 1330 190L1368 213" strokeWidth="7" />
        {hatch.map((y) => (
            <path key={y} d={`M1200 ${y}Q${1290 - (y - 108) * 0.7} ${y + (212 - y) * 0.3} ${1362 - (y - 108)} 212`} strokeWidth="2.500" strokeDasharray="7 2" />
        ))}
        <path d="M1325 74H1345" strokeWidth="6" />

        {/* shank */}
        <path d="M1583 69H1946Q1952 69 1952 75V212Q1952 218 1946 218H1583Q1578 218 1578 212V75Q1578 69 1583 69Z" strokeWidth="6.500" />
        <circle cx="2318" cy="143" r="73" strokeWidth="7.500" />

        {/* dimension */}
        <path d="M511 150V383M515 367H1950" stroke="#8b8b8b" strokeLinecap="butt" strokeWidth="3.500" />
        <path d="M1954 220V383" strokeLinecap="butt" strokeWidth="3.500" />
        <path d="M514 367L543 360V374ZM1950 367L1921 360V374Z" fill="#000" stroke="none" />
    </g>
);

const IsoView = () => (
    <g transform="translate(1000 540) scale(.3333)" fill="none" stroke="#000" strokeWidth="4.500" strokeLinecap="round" strokeLinejoin="round">
        {/* point */}
        <path d="M124 69L106 115L88 127L74 162M124 69L129 106L113 108L108 133L92 128M106 115L110 128" />
        <path d="M74 162C90 185 150 218 218 236" strokeWidth="9" />

        {/* flutes */}
        <path d="M124 69C145 62 160 68 175 76L212 90" strokeWidth="5" />
        <path d="M129 106C150 150 180 200 218 238C255 268 290 280 330 294" />
        <path d="M212 90C225 110 232 140 246 165C270 220 300 270 345 300C380 325 415 340 462 348" strokeWidth="9" />
        <path d="M192 86C215 140 225 190 262 235C285 265 305 282 330 294M298 162C335 172 355 195 374 226M434 196C455 225 465 270 487 305" strokeWidth="2.500" />
        <path d="M246 161L292 156L328 149L345 155L445 197" strokeWidth="5" />
        <path d="M445 197C465 205 465 225 475 245L492 276" strokeWidth="8" />
        <path d="M345 155C362 180 362 205 378 235C400 285 425 325 462 348L492 372" />
        <path d="M485 270L497 297C515 340 545 375 590 391" strokeWidth="5" />

        {/* run-out */}
        <path d="M492 273L540 267L580 261L592 265M494 300C484 320 484 350 492 372" />
        <path d="M582 262C580 310 590 350 593 384C590 392 580 393 565 386" strokeWidth="5" />
        <path d="M500 300C530 312 560 290 574 264" />
        <path d="M512 306C525 335 540 362 558 380M522 306C535 335 548 365 565 384M532 304C543 335 556 362 572 386M541 300C552 332 562 360 578 388M549 296C560 330 570 360 584 388M557 290C566 325 576 355 588 386M565 282C572 318 580 350 590 382M572 274C576 310 584 345 592 380M515 268L560 276" strokeWidth="2" />

        {/* shank */}
        <path d="M592 265L790 355L806 360L1035 460M492 372L520 388L728 483L746 495L975 602" strokeWidth="5" />
        <path d="M806 360C770 358 740 380 728 415C720 445 722 470 734 487" />
        <path d="M1035 462C1060 466 1072 500 1070 530C1066 570 1040 603 1005 607C985 609 970 602 962 585C950 550 960 510 990 482C1005 468 1020 462 1035 462Z" strokeWidth="5" />
        <path d="M1050 470C1010 462 975 495 964 545C962 570 966 590 978 602" strokeWidth="6" />
    </g>
);

const Sheet = () => (
    <main className="flex-1 min-w-0 flex flex-col bg-[#efefef] border-l border-[#b98256] border-t-2 border-t-[#f6e9d8] overflow-hidden">
        <svg viewBox="707 120 940 763" preserveAspectRatio="xMinYMin slice" className="flex-1 min-h-0 w-full block">
            <path d="M719 842V180H1660M719 842H1660" fill="none" stroke="#efb884" strokeWidth="1.300" strokeDasharray="9 7" />
            <SideView />
            <text x="1191" y="406" textAnchor="middle" fontSize="14" fill="#111" fontFamily="Open Sans">153</text>
            <IsoView />
            <path d="M851 530V550L855 546L859 554L862 552L858 545H863Z" fill="#fff" stroke="#222" />
        </svg>
        <p className="h-[18px] shrink-0 pl-[5px] leading-5 text-[#111]">Sheet "Sheet1" Work</p>
        <div className="h-[2px] shrink-0 bg-[#f6ecd0]" />
    </main>
);

const StatusBar = () => (
    <footer className="h-[19px] shrink-0 flex items-stretch bg-[#cfcfcf] border-t border-[#8f8f7c] text-black">
        <div className="w-[615px] shrink-0 border-r border-[#f0f0f0]" />
        <p className="flex-1 pl-1 font-bold leading-[18px] whitespace-nowrap font-['Noto_Sans',sans-serif]">Sheet 'Sheet1' selected</p>
        <div className="w-[19px] border-x border-[#ececec]" />
        <div className="w-9 border-r border-[#ececec]" />
        <div className="flex items-center gap-1 pl-1 pt-[2px]">
            <Svg><path d="M0 0H16V16H0Z" fill="#87929b" /><path d="M3 5H12M5 5V12M9 5L8 12M11 6L10 12" stroke="#63605c" strokeWidth="1.500" /></Svg>
            <Svg><path d="M1 1H15V15H1Z" fill="#e9f0f5" stroke="#555" strokeDasharray="3 2" /><path d="M4 3H13V13H4Z" fill="#fff" stroke="#1f3b5c" strokeWidth="1.500" /><path d="M6 6H11V11H6Z" fill="#3b8ad0" /></Svg>
        </div>
    </footer>
);

const App = () => (
    <div className="h-screen flex overflow-hidden bg-[#efefef]">
        <Explorer />
        <div className="w-1 shrink-0 bg-[#0b0d0d]" />
        <div className="flex-1 min-w-0 flex flex-col text-[13px] leading-4 font-['Open_Sans',sans-serif]">
            <Ribbon />
            <SelectionBar />
            <div className="flex-1 min-h-0 flex">
                <ResourceBar />
                <Navigator />
                <Sheet />
            </div>
            <StatusBar />
        </div>
    </div>
);

export default App;
